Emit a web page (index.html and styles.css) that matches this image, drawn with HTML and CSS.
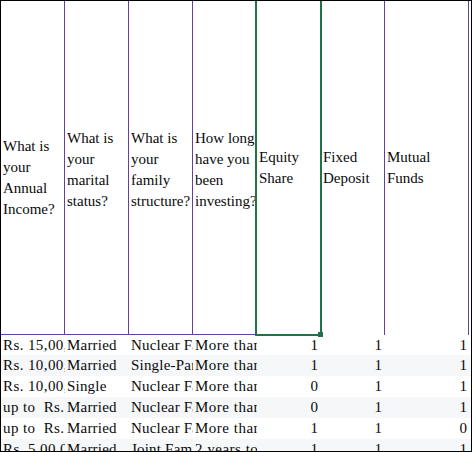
FILE: index.html
```html
<!DOCTYPE html>
<html>
<head>
<meta charset="utf-8">
<link rel="stylesheet" href="styles.css">
</head>
<body>
<div class="sheet">
  <div class="head">
    <div class="hc ruled first"><span>What is your Annual Income?</span></div>
    <div class="hc ruled q"><span>What is your marital status?</span></div>
    <div class="hc ruled q"><span>What is your family structure?</span></div>
    <div class="hc ruled q"><span>How long have you been investing?</span></div>
    <div class="hc"><span>Equity Share</span></div>
    <div class="hc"><span>Fixed Deposit</span></div>
    <div class="hc"><span>Mutual Funds</span></div>
  </div>
  <div class="row r1">
    <div class="c inc">Rs. 15,00,000 and above</div><div class="c">Married</div><div class="c">Nuclear Family</div><div class="c yrs">More than 5 years</div><div class="c n">1</div><div class="c n">1</div><div class="c n">1</div>
  </div>
  <div class="row alt">
    <div class="c inc">Rs. 10,00,000 - 15,00,000</div><div class="c">Married</div><div class="c">Single-Parent Family</div><div class="c yrs">More than 5 years</div><div class="c n">1</div><div class="c n">1</div><div class="c n">1</div>
  </div>
  <div class="row">
    <div class="c inc">Rs. 10,00,000 - 15,00,000</div><div class="c">Single</div><div class="c">Nuclear Family</div><div class="c yrs">More than 5 years</div><div class="c n">0</div><div class="c n">1</div><div class="c n">1</div>
  </div>
  <div class="row alt">
    <div class="c inc">up to&nbsp; Rs. 5,00,000</div><div class="c">Married</div><div class="c">Nuclear Family</div><div class="c yrs">More than 5 years</div><div class="c n">0</div><div class="c n">1</div><div class="c n">1</div>
  </div>
  <div class="row">
    <div class="c inc">up to&nbsp; Rs. 5,00,000</div><div class="c">Married</div><div class="c">Nuclear Family</div><div class="c yrs">More than 5 years</div><div class="c n">1</div><div class="c n">1</div><div class="c n">0</div>
  </div>
  <div class="row alt">
    <div class="c inc">Rs. 5,00,000 - 10,00,000</div><div class="c">Married</div><div class="c">Joint Family</div><div class="c yrs">2 years to 5 years</div><div class="c n">1</div><div class="c n">1</div><div class="c n">1</div>
  </div>
  <div class="sel"><span class="handle"></span></div>
</div>
</body>
</html>
```
FILE: styles.css
```css
* { box-sizing: border-box; }
html, body { margin: 0; padding: 0; background: #fff; }
body {
  font-family: "Liberation Serif", "Times New Roman", serif;
  font-size: 15px;
  color: #0a0a0a;
}
.sheet {
  position: relative;
  width: 472px;
  height: 452px;
  border: 1px solid #000;
  overflow: hidden;
  background: #fff;
}
.head, .row {
  display: grid;
  grid-template-columns: repeat(6, 64px) 84px;
}
.head { height: 334px; }
.hc {
  display: flex;
  align-items: center;
  padding: 0 0 0 2px;
  border-right: 1px solid #62409b;
  line-height: 21px;
}
.hc.ruled { border-bottom: 1px solid #62409b; }
.hc.first { padding-top: 20px; }
.hc.q { padding-top: 4px; }
.row {
  height: 21px;
  line-height: 21px;
}
.row.r1 { height: 20px; line-height: 20px; }
.row.alt { background: #f6f7f9; }
.c {
  white-space: pre;
  overflow: hidden;
  padding-left: 2px;
  letter-spacing: 0.2px;
}
.c.inc { letter-spacing: 0.4px; }
.c.yrs { letter-spacing: 0.5px; }
.c.n {
  text-align: right;
  padding: 0 3px 0 0;
  letter-spacing: 0;
}
.c.n:last-child { padding-right: 2px; }
.sel {
  position: absolute;
  left: 254px;
  top: -2px;
  width: 67px;
  height: 337px;
  border: 2px solid #217346;
}
.handle {
  position: absolute;
  left: 61px;
  top: 331px;
  width: 5px;
  height: 5px;
  background: #217346;
}
```
